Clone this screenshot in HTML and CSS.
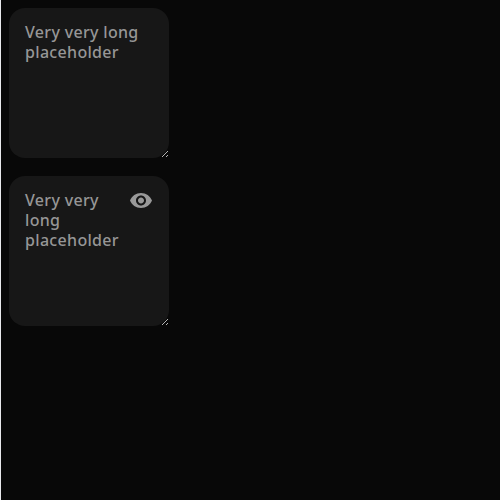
FILE: index.html
```html
<!DOCTYPE html>
<html lang="en">
<head>
<meta charset="utf-8">
<title>Text area</title>
<link rel="stylesheet" href="styles.css">
</head>
<body>
<main class="stack">
<label class="field"><textarea class="input" placeholder="Very very long placeholder"></textarea>
<svg class="grip" viewBox="0 0 6 6"><path d="M0 5h1v1H0zM1 4h1v1H1zM2 3h1v1H2zM3 2h1v1H3zM4 1h1v1H4zM5 0h1v1H5zM4 5h1v1H4zM5 4h1v1H5z"/></svg></label>
<label class="field"><textarea class="input with-icon" placeholder="Very very long placeholder"></textarea>
<svg class="icon" viewBox="0 0 24 24"><path d="M12 5C7 5 2.73 8.11 1 12.5 2.73 16.89 7 20 12 20s9.27-3.11 11-7.5C21.27 8.11 17 5 12 5zm0 12.5c-2.76 0-5-2.24-5-5s2.24-5 5-5 5 2.24 5 5-2.24 5-5 5zm0-8c-1.66 0-3 1.34-3 3s1.34 3 3 3 3-1.34 3-3-1.34-3-3-3z"/></svg>
<svg class="grip" viewBox="0 0 6 6"><path d="M0 5h1v1H0zM1 4h1v1H1zM2 3h1v1H2zM3 2h1v1H3zM4 1h1v1H4zM5 0h1v1H5zM4 5h1v1H4zM5 4h1v1H5z"/></svg></label>
</main>
</body>
</html>
```
FILE: styles.css
```css
html { background: #080808; min-height: 100%; }
body { margin: 0; }
.stack { box-sizing: border-box; min-height: 100vh; display: flex; flex-direction: column; align-items: flex-start; gap: 18px; padding: 8px; border-left: 1px solid #e8e9ec; }
.field { position: relative; display: block; width: 160px; height: 150px; }
.input { display: block; box-sizing: border-box; width: 160px; height: 150px; margin: 0; padding: 14px 16px; border: 0; border-radius: 16px; outline: 0; resize: none; overflow: hidden; background: #171717; color: #fff; font: 500 16px/20px "Noto Sans", sans-serif; letter-spacing: 0.32px; }
.input::placeholder { color: #969696; opacity: 1; }
.with-icon { padding-right: 48px; }
.icon { position: absolute; top: 12px; right: 16px; width: 24px; height: 24px; fill: #999; pointer-events: none; }
.grip { position: absolute; right: 1px; bottom: 1px; width: 6px; height: 6px; fill: #b4b4b4; shape-rendering: crispEdges; }
```
